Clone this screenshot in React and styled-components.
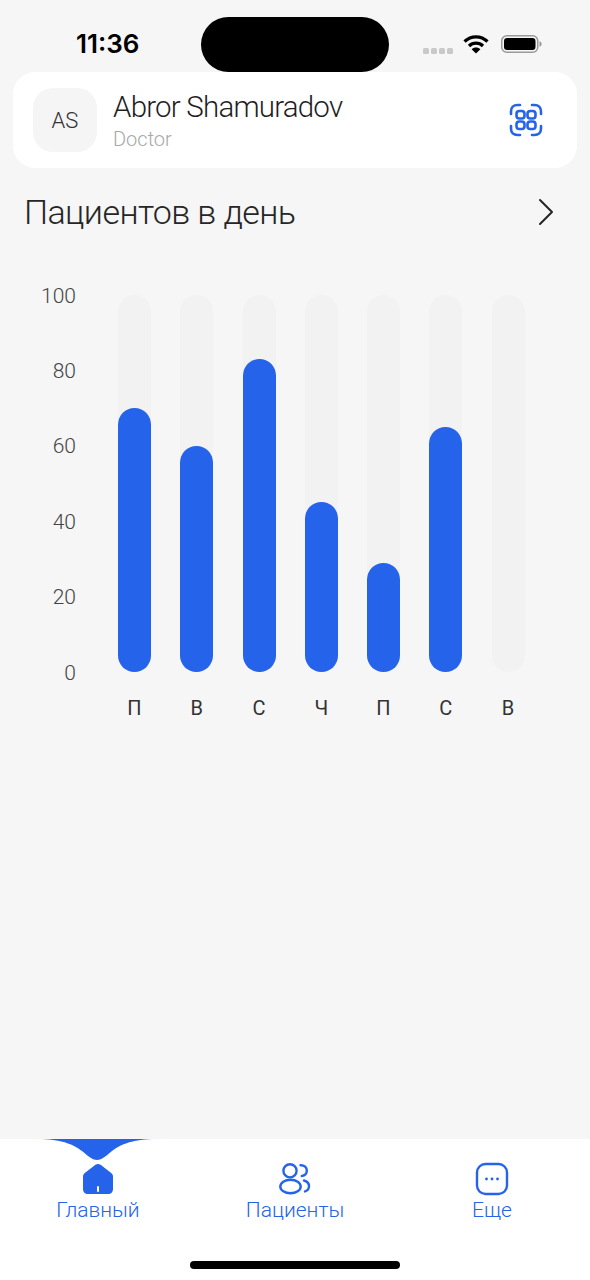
import React from "react";
import styled, { createGlobalStyle } from "styled-components";

const BLUE = "#2563eb";

const GlobalStyle = createGlobalStyle`
  html, body {
    margin: 0;
    padding: 0;
    background: #f6f6f6;
    font-family: Roboto, "Liberation Sans", sans-serif;
  }
`;

const Page = styled.div`
  width: 590px;
  height: 1280px;
  display: flex;
  flex-direction: column;
  background: #f6f6f6;
  overflow: hidden;
`;

const StatusBar = styled.div`
  height: 72px;
  flex: none;
  display: grid;
  grid-template-columns: 201px 188px 201px;
`;

const Clock = styled.div`
  padding-top: 28px;
  padding-left: 76px;
  font-family: Inter, sans-serif;
  font-size: 26px;
  line-height: 32px;
  font-weight: 600;
  color: #000;
`;

const Island = styled.div`
  margin-top: 17px;
  height: 55px;
  border-radius: 28px;
  background: #000;
`;

const StatusIcons = styled.div`
  display: flex;
  align-items: flex-start;
  padding: 34px 0 0 34px;
`;

const Dots = styled.div`
  display: flex;
  gap: 2px;
  margin-top: 14px;
  margin-right: 10px;
`;

const Dot = styled.span`
  width: 6px;
  height: 6px;
  border-radius: 1.5px;
  background: #c9c9c9;
`;

const Battery = styled.svg`
  margin-left: 12px;
  margin-top: 1px;
`;

const ProfileCard = styled.div`
  flex: none;
  height: 96px;
  margin: 0 13px;
  padding: 0 34px 0 20px;
  display: flex;
  align-items: center;
  background: #fff;
  border-radius: 22px;
`;

const Avatar = styled.div`
  width: 64px;
  height: 64px;
  border-radius: 20px;
  background: #f5f5f5;
  display: flex;
  align-items: center;
  justify-content: center;
  font-size: 22px;
  font-weight: 300;
  color: #333;
`;

const ProfileText = styled.div`
  flex: 1;
  margin-left: 16px;
`;

const Name = styled.div`
  font-size: 29.5px;
  line-height: 35px;
  font-weight: 300;
  letter-spacing: -0.8px;
  color: #1f1f1f;
`;

const Role = styled.div`
  margin-top: 2px;
  font-size: 20px;
  line-height: 24px;
  font-weight: 300;
  color: #a8a8a8;
`;

const SectionHead = styled.div`
  flex: none;
  display: flex;
  align-items: center;
  justify-content: space-between;
  margin-top: 22px;
  padding: 0 36px 0 24px;
  height: 44px;
`;

const SectionTitle = styled.div`
  font-size: 34px;
  line-height: 44px;
  font-weight: 300;
  letter-spacing: -0.6px;
  color: #262626;
`;

const Chart = styled.div`
  flex: none;
  margin-top: 61px;
  display: flex;
  align-items: flex-start;
  padding-left: 30px;
`;

const YAxis = styled.div`
  width: 46px;
  height: 377px;
  margin-top: 0.6px;
  display: flex;
  flex-direction: column;
  justify-content: space-between;
  align-items: flex-end;
`;

const YLabel = styled.div`
  height: 0;
  line-height: 0;
  font-size: 21px;
  font-weight: 300;
  color: #444;
`;

const Columns = styled.div`
  margin-left: 42px;
  width: 406.5px;
  display: flex;
  justify-content: space-between;
`;

const Column = styled.div`
  width: 33px;
  display: flex;
  flex-direction: column;
  align-items: center;
`;

const Track = styled.div`
  width: 33px;
  height: 377px;
  border-radius: 16.5px;
  background: #f2f2f2;
  display: flex;
  align-items: flex-end;
`;

const Fill = styled.div`
  width: 33px;
  height: ${({ $value }) => $value * 3.77}px;
  border-radius: 16.5px;
  background: ${BLUE};
`;

const DayLabel = styled.div`
  margin-top: 24px;
  font-size: 20px;
  line-height: 24px;
  font-weight: 400;
  color: #333;
`;

const Spacer = styled.div`
  flex: 1;
`;

const TabBar = styled.div`
  position: relative;
  flex: none;
  height: 141px;
  background: #fff;
`;

const Notch = styled.svg`
  position: absolute;
  left: 42px;
  top: 0;
`;

const Tabs = styled.div`
  display: grid;
  grid-template-columns: 196px 198px 196px;
  padding-top: 24px;
`;

const Tab = styled.div`
  display: flex;
  flex-direction: column;
  align-items: center;
`;

const TabIcon = styled.div`
  height: 32px;
  display: flex;
  align-items: center;
  justify-content: center;
`;

const TabLabel = styled.div`
  margin-top: 2px;
  font-size: 21px;
  line-height: 26px;
  font-weight: 300;
  color: ${BLUE};
`;

const HomeIndicator = styled.div`
  width: 210px;
  height: 8px;
  margin: 38px auto 0;
  border-radius: 4px;
  background: #000;
`;

const yTicks = [100, 80, 60, 40, 20, 0];
const days = [
  { day: "П", value: 70 },
  { day: "В", value: 60 },
  { day: "С", value: 83 },
  { day: "Ч", value: 45 },
  { day: "П", value: 29 },
  { day: "С", value: 65 },
  { day: "В", value: 0 },
];

const Wifi = () => (
  <svg width="26" height="20" viewBox="0 0 26 20" fill="none">
    <path d="M1.5 7.5C8 1.2 18 1.2 24.5 7.5" stroke="#000" strokeWidth="3.2" />
    <path d="M6 12C10 8.2 16 8.2 20 12" stroke="#000" strokeWidth="3.2" />
    <path d="M13 19.5 L8.6 15.2C11 12.9 15 12.9 17.4 15.2Z" fill="#000" />
  </svg>
);

const ScanIcon = () => (
  <svg width="34" height="34" viewBox="0 0 34 34" fill="none" stroke={BLUE} strokeWidth="2.6" strokeLinecap="round">
    <path d="M2 11V8.5C2 4.5 4.5 2 8.5 2H11" />
    <path d="M23 2H25.5C29.5 2 32 4.5 32 8.5V11" />
    <path d="M2 23V25.5C2 29.5 4.5 32 8.5 32H11" />
    <path d="M23 32H25.5C29.5 32 32 29.5 32 25.5V23" />
    <rect x="7.5" y="8" width="8" height="7.5" rx="2.8" />
    <rect x="18.5" y="8" width="8" height="7.5" rx="2.8" />
    <rect x="7.5" y="18.5" width="8" height="7.5" rx="2.8" />
    <rect x="18.5" y="18.5" width="8" height="7.5" rx="2.8" />
  </svg>
);

const HomeIcon = () => (
  <svg width="32" height="32" viewBox="0 0 32 32">
    <path
      d="M1 13.5C1 12 1.7 10.9 2.8 10L13.4 1.8C15 0.6 17 0.6 18.6 1.8L29.2 10C30.3 10.9 31 12 31 13.5V26C31 29 29 31 26 31H6C3 31 1 29 1 26Z"
      fill={BLUE}
    />
    <rect x="15" y="23" width="2" height="6" rx="1" fill="#fff" />
  </svg>
);

const PeopleIcon = () => (
  <svg width="32" height="32" viewBox="0 0 32 32" fill="none" stroke={BLUE} strokeWidth="2.4" strokeLinecap="round">
    <circle cx="11" cy="7.8" r="6.6" />
    <ellipse cx="11.5" cy="23.5" rx="10.2" ry="6.8" />
    <path d="M21.5 2.2C25.5 2 27.8 4.6 27.8 7.6C27.8 10.4 25.8 12.6 22.8 13" />
    <path d="M25 17.5C28 18.2 30 20.5 30 23.3C30 26 28.2 27.8 26 28.4" />
  </svg>
);

const MoreIcon = () => (
  <svg width="34" height="34" viewBox="0 0 34 34" fill="none">
    <rect x="2" y="2" width="30" height="30" rx="8.5" stroke={BLUE} strokeWidth="2.4" />
    <circle cx="11.5" cy="17" r="1.4" fill={BLUE} />
    <circle cx="17" cy="17" r="1.4" fill={BLUE} />
    <circle cx="22.5" cy="17" r="1.4" fill={BLUE} />
  </svg>
);

const App = () => {
  return (
    <Page>
      <GlobalStyle />
      <StatusBar>
        <Clock>11:36</Clock>
        <Island />
        <StatusIcons>
          <Dots>
            <Dot />
            <Dot />
            <Dot />
            <Dot />
          </Dots>
          <Wifi />
          <Battery width="41" height="18" viewBox="0 0 41 18" fill="none">
            <rect x="0.75" y="0.75" width="36" height="16.5" rx="5" stroke="#9a9a9a" strokeWidth="1.5" />
            <rect x="3" y="3" width="31.5" height="12" rx="3.2" fill="#000" />
            <path d="M38.5 6.2C40 6.6 40.6 7.7 40.6 9C40.6 10.3 40 11.4 38.5 11.8Z" fill="#9a9a9a" />
          </Battery>
        </StatusIcons>
      </StatusBar>

      <ProfileCard>
        <Avatar>AS</Avatar>
        <ProfileText>
          <Name>Abror Shamuradov</Name>
          <Role>Doctor</Role>
        </ProfileText>
        <ScanIcon />
      </ProfileCard>

      <SectionHead>
        <SectionTitle>Пациентов в день</SectionTitle>
        <svg width="16" height="28" viewBox="0 0 16 28" fill="none" stroke="#262626" strokeWidth="2" strokeLinecap="round" strokeLinejoin="round">
          <path d="M2 2L14 14L2 26" />
        </svg>
      </SectionHead>

      <Chart>
        <YAxis>
          {yTicks.map((tick) => (
            <YLabel key={tick}>{tick}</YLabel>
          ))}
        </YAxis>
        <Columns>
          {days.map((item, i) => (
            <Column key={i}>
              <Track>
                <Fill $value={item.value} />
              </Track>
              <DayLabel>{item.day}</DayLabel>
            </Column>
          ))}
        </Columns>
      </Chart>

      <Spacer />

      <TabBar>
        <Notch width="110" height="22" viewBox="0 0 110 22">
          <path d="M0 0H110C88 1 78 6 70 12C63 18 59 21 55 21C51 21 47 18 40 12C32 6 22 1 0 0Z" fill={BLUE} />
        </Notch>
        <Tabs>
          <Tab>
            <TabIcon>
              <HomeIcon />
            </TabIcon>
            <TabLabel>Главный</TabLabel>
          </Tab>
          <Tab>
            <TabIcon>
              <PeopleIcon />
            </TabIcon>
            <TabLabel>Пациенты</TabLabel>
          </Tab>
          <Tab>
            <TabIcon>
              <MoreIcon />
            </TabIcon>
            <TabLabel>Еще</TabLabel>
          </Tab>
        </Tabs>
        <HomeIndicator />
      </TabBar>
    </Page>
  );
};

export default App;
